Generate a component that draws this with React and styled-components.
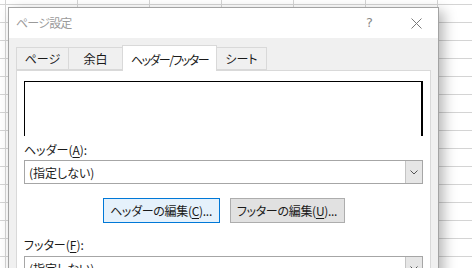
import React from "react";
import styled, { createGlobalStyle } from "styled-components";

const Global = createGlobalStyle`
  html, body { margin: 0; padding: 0; background: #fff; overflow: hidden; }
  * { box-sizing: border-box; }
`;

const FONT = `"Noto Sans CJK JP", "Noto Sans", sans-serif`;

const Screen = styled.div`
  position: relative;
  width: 472px;
  height: 268px;
  overflow: hidden;
  background-color: #fff;
  background-image:
    repeating-linear-gradient(to right, transparent 0 4px, #d4d4d4 4px 5px, transparent 5px 72px),
    repeating-linear-gradient(to bottom, transparent 0 3px, #d4d4d4 3px 4px, transparent 4px 18px);
  background-position: 1px 1px, 0 1px;
  font-family: ${FONT};
  font-feature-settings: "palt";
`;

const Dialog = styled.div`
  position: absolute;
  left: 8px;
  top: 7px;
  width: 431px;
  height: 300px;
  border: 1px solid #a3a3a3;
  background: #f0f0f0;
  box-shadow: 5px 4px 12px rgba(0, 0, 0, 0.28);
  display: flex;
  flex-direction: column;
`;

const TitleBar = styled.div`
  height: 30px;
  background: #fff;
  display: flex;
  align-items: center;
  padding: 0 16px 0 7px;
  flex-shrink: 0;
`;

const Title = styled.div`
  flex: 1;
  font-size: 12px;
  letter-spacing: -0.8px;
  color: #9a9a9a;
  margin-top: -1px;
`;

const Help = styled.div`
  font-family: "DejaVu Sans", sans-serif;
  font-size: 13px;
  color: #8a8a8a;
  margin-right: 38px;
  margin-top: -1px;
`;

const CloseIcon = () => (
  <svg width="11" height="11" viewBox="0 0 11 11">
    <path d="M0.5 0.5 L10.5 10.5 M10.5 0.5 L0.5 10.5" stroke="#7a7a7a" strokeWidth="1" fill="none" />
  </svg>
);

const Body = styled.div`
  flex: 1;
  padding: 7px 8px 0 7px;
  display: flex;
  flex-direction: column;
`;

const Tabs = styled.div`
  display: flex;
  align-items: flex-end;
  height: 25px;
  position: relative;
  z-index: 1;
`;

const Tab = styled.div`
  width: ${(p) => p.$w}px;
  height: ${(p) => (p.$active ? 26 : 23)}px;
  margin-bottom: ${(p) => (p.$active ? -1 : 0)}px;
  margin-right: -1px;
  padding-top: ${(p) => (p.$active ? 1 : 0)}px;
  border: 1px solid #d9d9d9;
  border-bottom: ${(p) => (p.$active ? "none" : "1px solid #d9d9d9")};
  background: ${(p) => (p.$active ? "#fff" : "#f0f0f0")};
  display: flex;
  align-items: center;
  justify-content: center;
  font-size: 12px;
  letter-spacing: ${(p) => p.$ls || 0}px;
  color: #1a1a1a;
  position: relative;
  z-index: ${(p) => (p.$active ? 2 : 1)};
`;

const Panel = styled.div`
  width: 415px;
  flex: 1;
  background: #fff;
  border: 1px solid #d9d9d9;
  padding: 10px 7px 0 7px;
  display: flex;
  flex-direction: column;
`;

const Preview = styled.div`
  width: 399px;
  height: 55px;
  border-top: 1px solid #000;
  border-left: 1px solid #000;
  border-right: 2px solid #000;
`;

const Label = styled.div`
  font-size: 12px;
  line-height: 16px;
  height: 16px;
  color: #1a1a1a;
  margin-top: ${(p) => p.$mt}px;
`;

const U = styled.span`
  text-decoration: underline;
  text-underline-offset: 2px;
`;

const Combo = styled.div`
  width: 399px;
  height: 24px;
  margin-top: ${(p) => p.$mt}px;
  border: 1px solid #a6a6a6;
  display: flex;
  align-items: stretch;
  flex-shrink: 0;
`;

const ComboText = styled.div`
  flex: 1;
  font-size: 12px;
  color: #1a1a1a;
  display: flex;
  align-items: center;
  padding-left: 4px;
`;

const ComboButton = styled.div`
  width: 17px;
  background: #e6e6e6;
  border-left: 1px solid #c4c4c4;
  display: flex;
  align-items: center;
  justify-content: center;
`;

const Chevron = () => (
  <svg width="8" height="5" viewBox="0 0 8 5">
    <path d="M0.5 0.5 L4 4 L7.5 0.5" stroke="#555" strokeWidth="1" fill="none" />
  </svg>
);

const ButtonRow = styled.div`
  display: flex;
  justify-content: center;
  gap: 10px;
  margin-top: 14px;
  width: 399px;
`;

const Button = styled.div`
  width: ${(p) => p.$w}px;
  height: 25px;
  border: 1px solid ${(p) => (p.$focus ? "#0078d7" : "#adadad")};
  background: ${(p) => (p.$focus ? "#e5f1fb" : "#e1e1e1")};
  display: flex;
  align-items: center;
  justify-content: center;
  font-size: 12px;
  letter-spacing: -0.3px;
  color: #1a1a1a;
`;

export default function App() {
  return (
    <>
      <Global />
      <Screen>
        <Dialog>
          <TitleBar>
            <Title>ページ設定</Title>
            <Help>?</Help>
            <CloseIcon />
          </TitleBar>
          <Body>
            <Tabs>
              <Tab $w={53}>ページ</Tab>
              <Tab $w={55}>余白</Tab>
              <Tab $w={95} $ls={-1.5} $active>ヘッダー/フッター</Tab>
              <Tab $w={51}>シート</Tab>
            </Tabs>
            <Panel>
              <Preview />
              <Label $mt={6}>
                ヘッダー(<U>A</U>):
              </Label>
              <Combo $mt={2}>
                <ComboText>(指定しない)</ComboText>
                <ComboButton>
                  <Chevron />
                </ComboButton>
              </Combo>
              <ButtonRow>
                <Button $w={117} $focus>
                  ヘッダーの編集(<U>C</U>)...
                </Button>
                <Button $w={115}>
                  フッターの編集(<U>U</U>)...
                </Button>
              </ButtonRow>
              <Label $mt={14}>
                フッター(<U>F</U>):
              </Label>
              <Combo $mt={3}>
                <ComboText>(指定しない)</ComboText>
                <ComboButton>
                  <Chevron />
                </ComboButton>
              </Combo>
            </Panel>
          </Body>
        </Dialog>
      </Screen>
    </>
  );
}
